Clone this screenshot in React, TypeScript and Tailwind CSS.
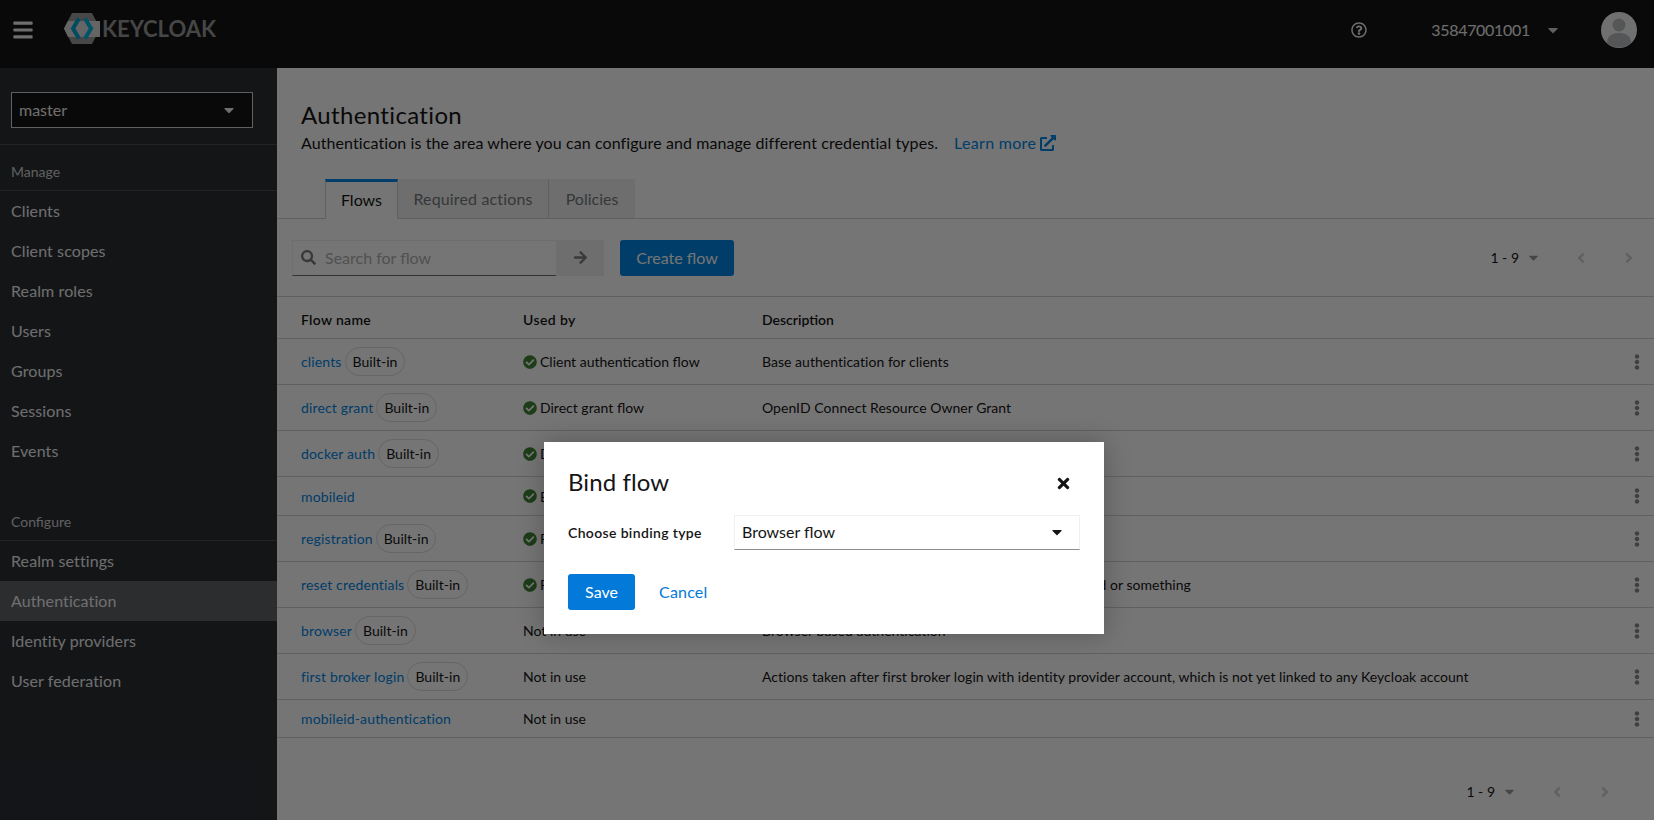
import React from 'react';
import {
  FaAngleLeft,
  FaAngleRight,
  FaArrowRight,
  FaBars,
  FaCaretDown,
  FaCheckCircle,
  FaEllipsisV,
  FaExternalLinkAlt,
  FaRegQuestionCircle,
  FaSearch,
  FaTimes,
} from 'react-icons/fa';

const manageLinks = ['Clients', 'Client scopes', 'Realm roles', 'Users', 'Groups', 'Sessions', 'Events'];
const configureLinks = ['Realm settings', 'Authentication', 'Identity providers', 'User federation'];

const flows = [
  { name: 'clients', builtIn: true, used: 'Client authentication flow', active: true, desc: 'Base authentication for clients', h: 'h-[46px]' },
  { name: 'direct grant', builtIn: true, used: 'Direct grant flow', active: true, desc: 'OpenID Connect Resource Owner Grant', h: 'h-[46px]' },
  { name: 'docker auth', builtIn: true, used: 'Docker auth flow', active: true, desc: 'Used by Docker clients to authenticate against the IDP', h: 'h-[46px]' },
  { name: 'mobileid', builtIn: false, used: 'Browser flow', active: true, desc: '', h: 'h-[39px]' },
  { name: 'registration', builtIn: true, used: 'Registration flow', active: true, desc: 'Registration flow', h: 'h-[46px]' },
  { name: 'reset credentials', builtIn: true, used: 'Reset credentials flow', active: true, desc: 'Reset credentials for a user if they forgot their password or something', h: 'h-[46px]' },
  { name: 'browser', builtIn: true, used: 'Not in use', active: false, desc: 'Browser based authentication', h: 'h-[46px]' },
  { name: 'first broker login', builtIn: true, used: 'Not in use', active: false, desc: 'Actions taken after first broker login with identity provider account, which is not yet linked to any Keycloak account', h: 'h-[46px]' },
  { name: 'mobileid-authentication', builtIn: false, used: 'Not in use', active: false, desc: '', h: 'h-[38px]' },
];

const Logo = () => (
  <div className="flex items-center ml-[30px] mb-[3px]">
    <svg width="36" height="31" viewBox="0 0 36 31" className="shrink-0">
      <path d="M8 0H28L36 15.5L28 31H8L0 15.5Z" fill="#9b9b9b" />
      <path d="M0 15.5L4 8H36V24H4Z" fill="#dcdcdc" />
      <path d="M15 5.5L9 15.5L15 25.5" fill="none" stroke="#00a3cf" strokeWidth="4" />
      <path d="M21 5.5L27 15.5L21 25.5" fill="none" stroke="#00b8e3" strokeWidth="4" />
    </svg>
    <span className="ml-[2px] text-[22px] font-bold leading-none text-[#989898]">KEYCLOAK</span>
  </div>
);

const Avatar = () => (
  <svg width="36" height="36" viewBox="0 0 36 36">
    <circle cx="18" cy="18" r="18" fill="#f5f5f5" />
    <circle cx="18" cy="13" r="6.5" fill="#b8bbbe" />
    <path d="M6 31c0-7 5-10 12-10s12 3 12 10a18 18 0 0 1-24 0Z" fill="#b8bbbe" />
  </svg>
);

const Pagination = ({ className }: { className: string }) => (
  <div className={`flex items-center text-[14px] text-[#151515] ${className}`}>
    <span>1 - 9</span>
    <FaCaretDown className="ml-[7px] text-[#9a9a9a] text-[15px]" />
    <FaAngleLeft className="ml-[32px] text-[#d2d2d2] text-[16px]" />
    <FaAngleRight className="ml-[32px] text-[#d2d2d2] text-[16px]" />
  </div>
);

const Header = () => (
  <header className="flex items-center h-[68px] pb-[8px] bg-[#151515] shrink-0 text-[#f0f0f0]">
    <FaBars className="ml-[12px] w-[22px] h-[22px] shrink-0" />
    <Logo />
    <FaRegQuestionCircle className="ml-auto w-[16px] h-[16px]" />
    <span className="ml-[64px] text-[16px] tracking-[-0.3px]">35847001001</span>
    <FaCaretDown className="ml-[15px] w-[16px] h-[16px] text-[#d2d2d2]" />
    <div className="ml-[40px] mr-[17px]">
      <Avatar />
    </div>
  </header>
);

const Sidebar = () => (
  <aside className="w-[277px] shrink-0 bg-[#2b2e34] text-[#f0f0f0] flex flex-col">
    <div className="pt-[24px] pb-[16px] border-b border-[#4a4d52]">
      <div className="mx-[11px] h-[36px] w-[242px] border border-[#d2d2d2] bg-[#151515] flex items-center justify-between pl-[7px] pr-[15px] text-[16px]">
        master
        <FaCaretDown className="w-[16px] h-[16px]" />
      </div>
    </div>
    <div className="pl-[11px] pt-[17px] pb-[8px] text-[14px] text-[#d2d2d2] border-b border-[#4a4d52] leading-[20px]">Manage</div>
    <nav className="flex flex-col">
      {manageLinks.map(link => (
        <div key={link} className="h-[40px] flex items-center pl-[11px] text-[16px] tracking-[0.1px]">{link}</div>
      ))}
    </nav>
    <div className="mt-[31px] pl-[11px] pt-[10px] pb-[8px] text-[14px] text-[#d2d2d2] border-b border-[#4a4d52] leading-[20px]">Configure</div>
    <nav className="flex flex-col">
      {configureLinks.map(link => (
        <div key={link} className={`h-[40px] flex items-center pl-[11px] text-[16px] tracking-[0.1px] ${link === 'Authentication' ? 'bg-[#606367]' : ''}`}>{link}</div>
      ))}
    </nav>
  </aside>
);

const Tabs = () => (
  <div className="flex mt-[25px] pl-[48px] border-b border-[#d2d2d2] h-[40px]">
    <div className="w-[73px] h-[40px] pb-[2px] bg-white border-t-[3px] border-[#0085e5] border-x border-x-[#d2d2d2] flex items-center justify-center text-[16px] text-[#151515]">Flows</div>
    <div className="w-[151px] h-[39px] bg-[#f0f0f0] border-r border-[#d2d2d2] flex items-center justify-center text-[16px] tracking-[0.15px] text-[#75797d]">Required actions</div>
    <div className="w-[86px] h-[39px] bg-[#f0f0f0] flex items-center justify-center text-[16px] text-[#75797d]">Policies</div>
  </div>
);

const Toolbar = () => (
  <div className="flex items-center h-[78px] pl-[15px] border-b border-[#d2d2d2]">
    <div className="w-[264px] h-[36px] flex items-center bg-white border-b border-[#6a6e73] border-t border-l border-t-[#f0f0f0] border-l-[#f0f0f0]">
      <FaSearch className="ml-[8px] w-[15px] h-[15px] text-[#7a7d80]" />
      <span className="ml-[9px] text-[16px] text-[#b0b0b0]">Search for flow</span>
    </div>
    <div className="w-[48px] h-[36px] bg-[#f0f0f0] flex items-center justify-center">
      <FaArrowRight className="w-[15px] h-[15px] text-[#7a7d80]" />
    </div>
    <div className="ml-[16px] w-[114px] h-[36px] rounded-[3px] bg-[#0085e5] text-white text-[16px] flex items-center justify-center">Create flow</div>
    <Pagination className="ml-auto mr-[17px]" />
  </div>
);

const FlowRow = ({ flow }: { flow: (typeof flows)[number] }) => (
  <div className={`flex items-center pl-[24px] border-b border-[#d2d2d2] text-[14px] text-[#151515] ${flow.h}`}>
    <div className="w-[222px] flex items-center">
      <span className="text-[#0085e5] tracking-[0.15px]">{flow.name}</span>
      {flow.builtIn && (
        <span className="ml-[3px] h-[29px] px-[7px] rounded-full border border-[#dcdcdc] flex items-center">Built-in</span>
      )}
    </div>
    <div className="w-[239px] flex items-center">
      {flow.active && <FaCheckCircle className="mr-[3px] w-[14px] h-[14px] text-[#3e8635]" />}
      {flow.used}
    </div>
    <div className="flex-1 tracking-[0.03px]">{flow.desc}</div>
    <FaEllipsisV className="mr-[10px] w-[14px] h-[16px] text-[#8a8d90]" />
  </div>
);

const Main = () => (
  <main className="flex-1 bg-white flex flex-col">
    <div className="pl-[24px] pt-[32px]">
      <h1 className="text-[24px] leading-[30px] tracking-[0.35px] text-[#151515]">Authentication</h1>
      <p className="text-[16px] leading-[24px] pt-[1px] -mb-[1px] tracking-[0.09px] text-[#151515] flex items-center">
        Authentication is the area where you can configure and manage different credential types.
        <span className="ml-[16px] text-[#0085e5] flex items-center tracking-[0.3px]">
          Learn more
          <FaExternalLinkAlt className="ml-[4px] w-[16px] h-[16px]" />
        </span>
      </p>
    </div>
    <Tabs />
    <Toolbar />
    <div className="flex items-center h-[42px] pt-[3px] pl-[24px] border-b border-[#d2d2d2] text-[14px] font-semibold text-[#151515]">
      <div className="w-[222px] tracking-[0.3px]">Flow name</div>
      <div className="w-[239px] tracking-[0.4px]">Used by</div>
      <div>Description</div>
    </div>
    {flows.map(flow => <FlowRow key={flow.name} flow={flow} />)}
    <Pagination className="mt-[43px] ml-auto mr-[41px]" />
  </main>
);

const Modal = () => (
  <div className="absolute left-[544px] top-[442px] w-[560px] h-[192px] bg-white shadow-[0_0_24px_rgba(0,0,0,0.25)] px-[24px] pt-[24px]">
    <div className="flex items-center justify-between h-[32px]">
      <h2 className="text-[24px] tracking-[0.1px] text-[#151515]">Bind flow</h2>
      <FaTimes className="mr-[8px] mt-[3px] w-[17px] h-[17px] text-[#151515]" />
    </div>
    <div className="flex items-center mt-[16px] h-[36px]">
      <label className="w-[166px] text-[14px] font-semibold tracking-[0.35px] text-[#151515]">Choose binding type</label>
      <div className="flex-1 h-[35px] flex items-center justify-between border border-[#f0f0f0] border-b-[#8a8d90] pl-[7px] pr-[14px] text-[16px] text-[#151515]">
        Browser flow
        <FaCaretDown className="w-[16px] h-[16px]" />
      </div>
    </div>
    <div className="flex items-center mt-[24px]">
      <div className="w-[67px] h-[36px] rounded-[3px] bg-[#0379d9] text-white text-[16px] flex items-center justify-center">Save</div>
      <div className="ml-[24px] text-[16px] tracking-[0.2px] text-[#0379d9]">Cancel</div>
    </div>
  </div>
);

const App: React.FC = () => (
  <div className="relative h-[820px] w-[1654px] overflow-hidden flex flex-col font-['Lato','Noto_Sans',sans-serif]">
    <Header />
    <div className="flex flex-1 min-h-0">
      <Sidebar />
      <Main />
    </div>
    <div className="absolute inset-0 bg-black/54" />
    <Modal />
  </div>
);

export default App;
